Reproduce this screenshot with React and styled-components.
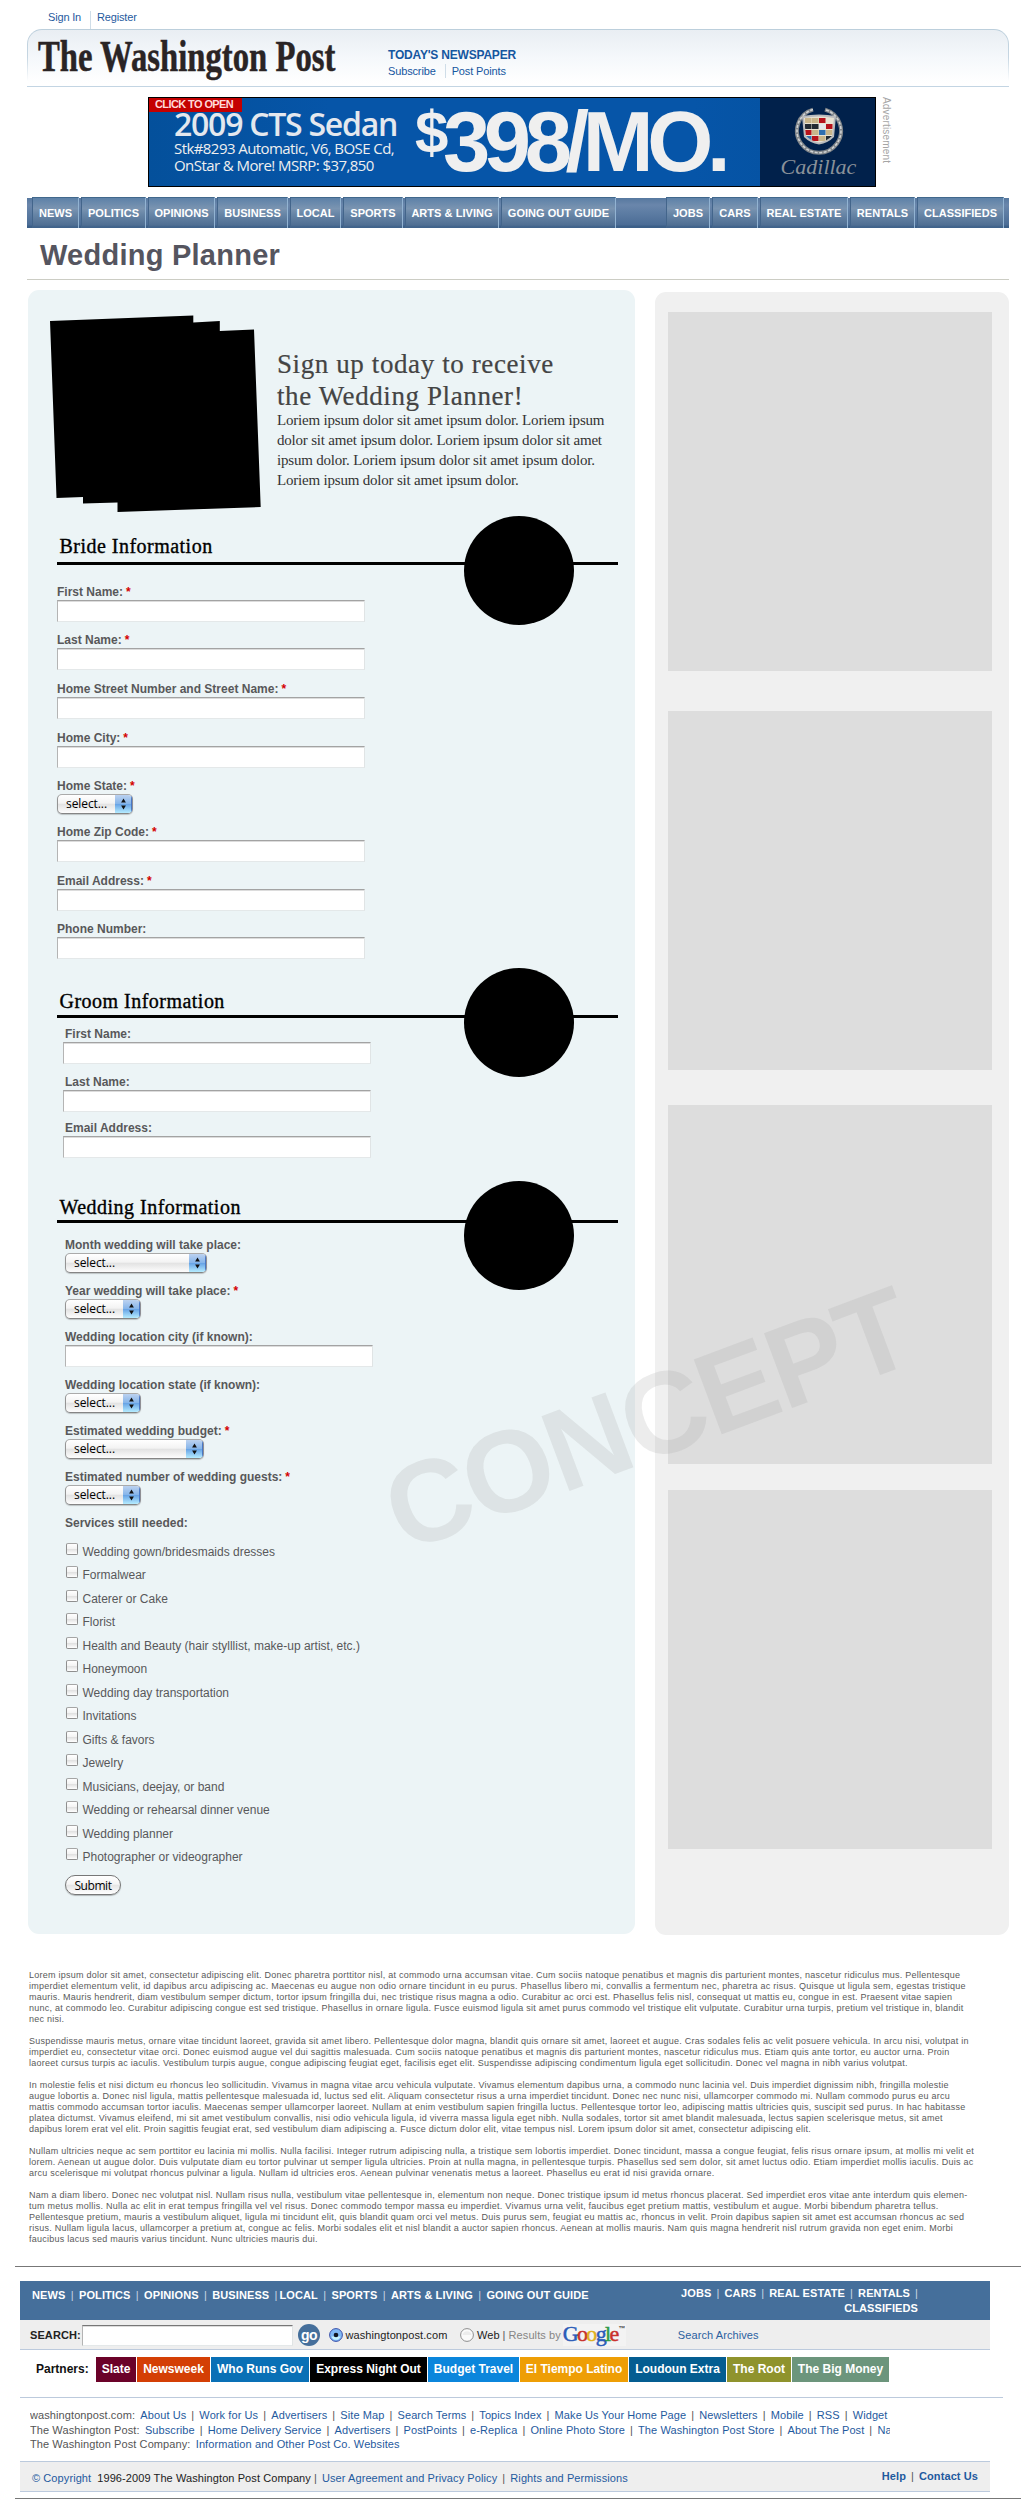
import React from "react";
import styled, { createGlobalStyle } from "styled-components";

const sans = `"Liberation Sans", Arial, sans-serif`;
const serif = `"Liberation Serif", "Times New Roman", serif`;
const humanist = `"Open Sans", "Noto Sans", sans-serif`;
const link = "#1f5a9e";

const Global = createGlobalStyle`
  * { box-sizing: border-box; }
  body { margin: 0; background: #fff; font-family: ${sans}; font-size: 11px; color: #333; }
  h1, h2, p { margin: 0; font-weight: normal; }
  a { color: inherit; text-decoration: none; }
`;

const Page = styled.div`
  position: relative;
  width: 1036px;
  height: 2500px;
  overflow: hidden;
  background: #fff;
`;

/* ---------- masthead ---------- */
const Account = styled.div`
  display: flex;
  height: 29px;
  padding: 11px 0 0 48px;
  line-height: 13px;
  color: ${link};
  letter-spacing: -0.17px;
`;

const Divided = styled.a`
  margin-left: 9px;
  padding-left: 6px;
  border-left: 1px solid #cfdde8;
`;

const MastheadEdge = styled.header`
  width: 982px;
  height: 58px;
  margin-left: 27px;
  padding: 1px 1px 0;
  border-radius: 15px 15px 0 0;
  border-bottom: 1px solid #c3d5e3;
  background: linear-gradient(#bccfdc 0%, #c6d6e2 50%, #ffffff 92%);
`;

const Masthead = styled.div`
  display: flex;
  height: 56px;
  border-radius: 14px 14px 0 0;
  background: linear-gradient(#e9eef3 0%, #f5f8fb 50%, #ffffff 95%);
`;

const Wordmark = styled.div`
  flex: none;
  width: 302px;
  height: 56px;
  margin-left: 10px;
  padding-top: 2px;
`;

const WordmarkText = styled.span`
  display: inline-block;
  transform: scaleX(0.743);
  transform-origin: 0 0;
  font: bold 44px/49px ${serif};
  color: #2a2425;
  -webkit-text-stroke: 0.5px #2a2425;
  white-space: nowrap;
`;

const Paper = styled.div`
  padding: 18px 0 0 48px;
  color: #1556a0;
`;

const PaperTitle = styled.div`
  font: bold 12px/15px ${sans};
  letter-spacing: -0.2px;
`;

const PaperLinks = styled.div`
  display: flex;
  margin-top: 1px;
  line-height: 14px;
  letter-spacing: -0.14px;
`;

/* ---------- banner ---------- */
const BannerRow = styled.div`
  display: flex;
  height: 90px;
  margin: 10px 0 0 148px;
`;

const Banner = styled.div`
  position: relative;
  display: flex;
  width: 728px;
  height: 90px;
  border: 1px solid #000;
  background: linear-gradient(90deg, #04509b 0%, #0655a8 25%, #0655a8 75%, #04509d 100%);
  color: #efefef;
  white-space: nowrap;
`;

const OpenTag = styled.div`
  position: absolute;
  left: 0;
  top: 0;
  width: 93px;
  height: 14px;
  padding-left: 6px;
  background: #c40000;
  color: #ffd9d9;
  font: bold 11px/13px ${sans};
  letter-spacing: -0.6px;
`;

const Offer = styled.div`
  width: 266px;
  padding: 10px 0 0 25px;
  font: 15px/17px ${humanist};
  letter-spacing: -0.57px;
`;

const Model = styled.div`
  font: 600 32px/32px ${humanist};
  letter-spacing: -1.25px;
  color: #e4e8ee;
`;

const Dollar = styled.div`
  width: 28px;
  padding-top: 5px;
  font: bold 60px/60px ${sans};
`;

const Price = styled.div`
  padding-top: 1px;
  font: bold 85px/85px ${sans};
  letter-spacing: -6.4px;
`;

const CarBrand = styled.div`
  display: flex;
  flex-direction: column;
  align-items: center;
  width: 115px;
  height: 88px;
  margin-left: auto;
  padding: 7px 0 0 2px;
  background: #01214b;
  color: #8a9199;
`;

const Script = styled.div`
  font: italic 22px/24px ${serif};
  letter-spacing: 0;
`;

const AdNote = styled.div`
  margin-left: 3px;
  writing-mode: vertical-rl;
  font: 10px/14px ${sans};
  letter-spacing: 0.17px;
  color: #a5a5a5;
`;

/* ---------- navigation ---------- */
const Nav = styled.nav`
  display: flex;
  gap: 2px;
  width: 982px;
  height: 31px;
  margin: 10px 0 0 27px;
  padding: 0 5px;
  background: linear-gradient(#fff 0 1px, #56789f 1px, #6a86ab 8px, #5b7ba2 17px, #4b6c95 28px, #3b5f88 29px);
`;

const Tab = styled.a`
  flex: none;
  width: ${(p) => p.$w}px;
  height: 31px;
  margin-left: ${(p) => p.$push || 0}px;
  border-left: 1px solid #43658b;
  border-right: 1px solid #92b3d2;
  border-top: 1px solid #41688c;
  background: linear-gradient(#5d81a8 0%, #7a94b1 35%, #6785a6 55%, #506f93 90%, #40638b 96%);
  color: #fff;
  font: bold 11px/30px ${sans};
  letter-spacing: 0.04px;
  text-align: center;
`;

const PageTitle = styled.h1`
  width: 982px;
  height: 52px;
  margin-left: 27px;
  padding: 11px 0 0 13px;
  border-bottom: 1px solid #cccdc4;
  font: bold 29px/32px ${sans};
  letter-spacing: 0.25px;
  color: #55555f;
`;

/* ---------- body columns ---------- */
const Columns = styled.div`
  display: flex;
  gap: 20px;
  height: 1645px;
  margin: 10px 0 0 28px;
`;

const Main = styled.main`
  width: 607px;
  height: 1644px;
  border-radius: 11px;
  background: #ecf4f6;
`;

const Sidebar = styled.aside`
  width: 354px;
  height: 1643px;
  margin-top: 2px;
  padding: 20px 0 0 13px;
  border-radius: 11px;
  background: #f0f0f0;
`;

const AdSlot = styled.div`
  width: 324px;
  height: 359px;
  margin-bottom: ${(p) => p.$after}px;
  background: #ddd;
`;

const Hero = styled.section`
  display: flex;
  height: 244px;
  padding-left: 22px;
`;

const Stack = styled.svg`
  flex: none;
  display: block;
  width: 227px;
  height: 244px;
`;

const Pitch = styled.div`
  padding-top: 58px;
  white-space: nowrap;
`;

const Headline = styled.h2`
  font: 27px/32px ${serif};
  letter-spacing: 0.6px;
  color: #444;
  -webkit-text-stroke: 0.2px #444;
`;

const Blurb = styled.p`
  margin-top: -2px;
  font: 15px/20px ${serif};
  letter-spacing: -0.2px;
  color: #333;
`;

const SectionHead = styled.h2`
  position: relative;
  width: 561px;
  height: 31px;
  margin: 0 0 ${(p) => p.$after}px 28.5px;
  padding: ${(p) => p.$drop}px 0 0 3px;
  border-bottom: 3px solid #000;
  font: 20px/24px ${serif};
  letter-spacing: 0.48px;
  color: #000;
  -webkit-text-stroke: 0.35px #000;
`;

const Dot = styled.span`
  position: absolute;
  left: 407.5px;
  top: ${(p) => p.$top}px;
  width: 110px;
  height: 109px;
  border-radius: 50%;
  background: #000;
`;

const Field = styled.label`
  display: block;
  height: ${(p) => p.$h}px;
  padding-left: ${(p) => p.$x}px;
`;

const Label = styled.span`
  display: block;
  height: 15px;
  font: bold 12px/14px ${sans};
  color: #58585a;
`;

const Star = styled.span`
  margin-left: 3px;
  color: #d40000;
`;

const TextBox = styled.input`
  display: block;
  width: 308px;
  height: 22px;
  margin-left: ${(p) => p.$shift || 0}px;
  padding: 0 4px;
  border: 1px solid;
  border-color: #a3a3a3 #e0e4e5 #e4e8e9 #b4b4b4;
  border-radius: 0;
  background: #fff;
  box-shadow: inset 0 1px 0 #dcdcdc;
  outline: none;
`;

const Picker = styled.span`
  display: flex;
  justify-content: space-between;
  width: ${(p) => p.$w}px;
  height: 20px;
  border: 1px solid;
  border-color: #aaa #8f8f95 #858585 #949494;
  border-radius: 5px;
  overflow: hidden;
  background: linear-gradient(#fff 0%, #f3f3f3 45%, #e3e3e3 52%, #fdfdfd 100%);
  box-shadow: 0 1px 1px rgba(0, 0, 0, 0.2);
  padding-left: 8px;
  font: 12px/18px ${humanist};
  letter-spacing: -0.08px;
  color: #000;
`;

const Arrows = styled.svg`
  display: block;
  width: 17px;
  height: 18px;
  background: linear-gradient(#bcd2f0 0%, #86b5ea 48%, #68a4e6 52%, #b5ecff 100%);
  box-shadow: inset -1px 0 0 #4a78c4;
`;

const ServicesTitle = styled.div`
  height: 27px;
  padding-left: 37px;
  font: bold 12px/14px ${sans};
  color: #58585a;
`;

const Service = styled.label`
  display: flex;
  height: ${(p) => p.$h}px;
  padding-left: 38px;
  font: 12px/14px ${sans};
  color: #58585a;
`;

const Check = styled.input`
  appearance: none;
  width: 12px;
  height: 12px;
  margin: 0 4.5px 0 0;
  border: 1px solid #8f8f8f;
  border-top-color: #a5a5a5;
  border-radius: 2px;
  background: linear-gradient(#fff 0%, #f4f4f4 45%, #e2e2e2 55%, #fff 100%);
`;

const CheckText = styled.span`
  padding-top: 2px;
`;

const Submit = styled.button`
  display: block;
  width: 56px;
  height: 20px;
  margin: 3px 0 0 37px;
  padding: 0;
  border: 1px solid #777;
  border-radius: 10px;
  background: linear-gradient(#fff 0%, #f5f5f5 45%, #e6e6e6 52%, #fff 100%);
  box-shadow: 0 1px 1px rgba(0, 0, 0, 0.25);
  font: 12px/17px ${humanist};
  letter-spacing: -0.42px;
  color: #000;
`;

const Watermark = styled.div`
  position: absolute;
  left: 403.5px;
  top: 1455px;
  transform-origin: 0 98px;
  transform: rotate(-20.5deg);
  font: bold 116px/116px ${sans};
  letter-spacing: -2.5px;
  color: rgba(165, 165, 165, 0.21);
  pointer-events: none;
`;

/* ---------- small print ---------- */
const Fine = styled.section`
  height: 310px;
  padding: 35px 0 0 29px;
`;

const FineText = styled.p`
  margin-bottom: 11px;
  font: 9px/11px ${sans};
  letter-spacing: 0.245px;
  color: #5a5a5a;
  white-space: pre;
`;

/* ---------- footer ---------- */
const PageRule = styled.div`
  width: 1006px;
  height: 1px;
  margin: ${(p) => p.$before}px 0 0 15px;
  background: #777;
`;

const FooterNav = styled.div`
  display: flex;
  justify-content: space-between;
  width: 970px;
  height: 39px;
  margin: 14px 0 0 20px;
  padding: 0 72px 0 12px;
  background: #456f9b;
  color: #fff;
  font: bold 11px/15px ${sans};
  letter-spacing: 0.1px;
  white-space: nowrap;
`;

const FooterGroup = styled.div`
  display: flex;
  flex-wrap: wrap;
  align-content: flex-start;
  justify-content: ${(p) => (p.$end ? "flex-end" : "flex-start")};
  width: ${(p) => p.$w}px;
  padding-top: ${(p) => p.$top}px;
`;

const Sep = styled.span`
  margin: 0 ${(p) => p.$r ?? 5.1}px 0 ${(p) => p.$l ?? 5}px;
  font-weight: normal;
  color: ${(p) => p.$c || "#555"};
`;

const SearchRow = styled.div`
  display: flex;
  width: 970px;
  height: 30px;
  margin-left: 20px;
  padding-left: 10px;
  border-bottom: 1px solid #bccadd;
  background: #eee;
  font: 11px/31px ${sans};
  letter-spacing: 0.09px;
  color: #222;
  white-space: nowrap;
`;

const SearchLabel = styled.b`
  width: 52px;
`;

const SearchBox = styled(TextBox)`
  width: 211px;
  height: 21px;
  margin-top: 5px;
  border-top-color: #777;
`;

const Go = styled.button`
  width: 22px;
  height: 22px;
  margin: 4px 9px 0 5px;
  padding: 0;
  border: 0;
  border-radius: 50%;
  background: #456f9b;
  color: #fff;
  font: bold 14px/18px ${sans};
  letter-spacing: -0.6px;
`;

const Radio = styled.svg`
  flex: none;
  width: 14px;
  height: 14px;
  margin: 8px 2.5px 0 ${(p) => p.$before || 0}px;
`;

const Muted = styled.span`
  color: #858585;
`;

const Google = styled.span`
  width: 63px;
  height: 22px;
  margin: 4px 0 0 2px;
  font: 22px/20px ${serif};
  letter-spacing: -1.7px;
  background: #f3f3f3;
`;

const Ink = styled.span`
  color: ${(p) => p.$c};
  -webkit-text-stroke: 0.5px ${(p) => p.$c};
`;

const Tm = styled.sup`
  margin-left: 1px;
  font: bold 7px/7px ${sans};
  letter-spacing: 0;
  vertical-align: 10px;
  color: #444;
`;

const Archives = styled.a`
  margin-left: 52px;
  color: #2b61a0;
`;

const Partners = styled.div`
  display: flex;
  gap: 1px;
  height: 25px;
  margin: 7px 0 0 36px;
  font: bold 12px/24px ${sans};
  color: #111;
  white-space: nowrap;
`;

const PartnersLabel = styled.span`
  width: 59px;
`;

const Partner = styled.a`
  width: ${(p) => p.$w}px;
  background: ${(p) => p.$c};
  color: #fff;
  text-align: center;
`;

const Directory = styled.div`
  width: 983px;
  height: 64px;
  margin: 15px 0 0 20px;
  padding: 10px 113px 0 10px;
  border-top: 1px solid #bccadd;
`;

const DirectoryLine = styled.div`
  display: flex;
  overflow: hidden;
  height: 14.5px;
  font: 11px/14.5px ${sans};
  letter-spacing: 0.09px;
  color: ${link};
  white-space: nowrap;
`;

const Owner = styled.span`
  margin-right: 5.3px;
  color: #555;
`;

const Legal = styled.div`
  display: flex;
  width: 970px;
  height: 31px;
  margin-left: 20px;
  padding: 0 12px;
  border: solid #bccadd;
  border-width: 1px 0;
  background: #eee;
  font: 11px/32px ${sans};
  letter-spacing: 0.09px;
  color: ${link};
  white-space: nowrap;
`;

const Holder = styled.span`
  margin-left: 6px;
  color: #222;
`;

const Help = styled.b`
  margin-left: auto;
  line-height: 28px;
`;

/* ---------- content ---------- */
const tabs = [
  ["NEWS", 47], ["POLITICS", 65], ["OPINIONS", 67], ["BUSINESS", 71], ["LOCAL", 51], ["SPORTS", 60],
  ["ARTS & LIVING", 94], ["GOING OUT GUIDE", 115], ["JOBS", 44, 48], ["CARS", 46], ["REAL ESTATE", 88],
  ["RENTALS", 65], ["CLASSIFIEDS", 87],
];

const bride = [
  ["First Name:", true, 48], ["Last Name:", true, 49], ["Home Street Number and Street Name:", true, 49],
  ["Home City:", true, 48], ["Home State:", true, 46, 76], ["Home Zip Code:", true, 49],
  ["Email Address:", true, 48], ["Phone Number:", false, 65],
];

const groom = [["First Name:", false, 48], ["Last Name:", false, 46], ["Email Address:", false, 71]];

const wedding = [
  ["Month wedding will take place:", false, 46, 142], ["Year wedding will take place:", true, 46, 76],
  ["Wedding location city (if known):", false, 48], ["Wedding location state (if known):", false, 46, 76],
  ["Estimated wedding budget:", true, 46, 139], ["Estimated number of wedding guests:", true, 46, 76],
];

const services = [
  "Wedding gown/bridesmaids dresses", "Formalwear", "Caterer or Cake", "Florist",
  "Health and Beauty (hair stylllist, make-up artist, etc.)", "Honeymoon", "Wedding day transportation",
  "Invitations", "Gifts & favors", "Jewelry", "Musicians, deejay, or band",
  "Wedding or rehearsal dinner venue", "Wedding planner", "Photographer or videographer",
];

const paragraphs = [
`Lorem ipsum dolor sit amet, consectetur adipiscing elit. Donec pharetra porttitor nisl, at commodo urna accumsan vitae. Cum sociis natoque penatibus et magnis dis parturient montes, nascetur ridiculus mus. Pellentesque
imperdiet elementum velit, id dapibus arcu adipiscing ac. Maecenas eu augue non odio ornare tincidunt in eu purus. Phasellus libero mi, convallis a fermentum nec, pharetra ac risus. Quisque ut ligula sem, egestas tristique
mauris. Mauris hendrerit, diam vestibulum semper dictum, tortor ipsum fringilla dui, nec tristique risus magna a odio. Curabitur ac orci est. Phasellus felis nisl, consequat ut mattis eu, congue in est. Praesent vitae sapien
nunc, at commodo leo. Curabitur adipiscing congue est sed tristique. Phasellus in ornare ligula. Fusce euismod ligula sit amet purus commodo vel tristique elit vulputate. Curabitur urna turpis, pretium vel tristique in, blandit
nec nisi.`,
`Suspendisse mauris metus, ornare vitae tincidunt laoreet, gravida sit amet libero. Pellentesque dolor magna, blandit quis ornare sit amet, laoreet et augue. Cras sodales felis ac velit posuere vehicula. In arcu nisi, volutpat in
imperdiet eu, consectetur vitae orci. Donec euismod augue vel dui sagittis malesuada. Cum sociis natoque penatibus et magnis dis parturient montes, nascetur ridiculus mus. Etiam quis ante tortor, eu auctor urna. Proin
laoreet cursus turpis ac iaculis. Vestibulum turpis augue, congue adipiscing feugiat eget, facilisis eget elit. Suspendisse adipiscing condimentum ligula eget sollicitudin. Donec vel magna in nibh varius volutpat.`,
`In molestie felis et nisi dictum eu rhoncus leo sollicitudin. Vivamus in magna vitae arcu vehicula vulputate. Vivamus elementum dapibus urna, a commodo nunc lacinia vel. Duis imperdiet dignissim nibh, fringilla molestie
augue lobortis a. Donec nisl ligula, mattis pellentesque malesuada id, luctus sed elit. Aliquam consectetur risus a urna imperdiet tincidunt. Donec nec nunc nisi, ullamcorper commodo mi. Nullam commodo purus eu arcu
mattis commodo accumsan tortor iaculis. Maecenas semper ullamcorper laoreet. Nullam at enim vestibulum sapien fringilla luctus. Pellentesque tortor leo, adipiscing mattis ultricies quis, suscipit sed purus. In hac habitasse
platea dictumst. Vivamus eleifend, mi sit amet vestibulum convallis, nisi odio vehicula ligula, id viverra massa ligula eget nibh. Nulla sodales, tortor sit amet blandit malesuada, lectus sapien scelerisque metus, sit amet
dapibus lorem erat vel elit. Proin sagittis feugiat erat, sed vestibulum diam adipiscing a. Fusce dictum dolor elit, vitae tempus nisl. Lorem ipsum dolor sit amet, consectetur adipiscing elit.`,
`Nullam ultricies neque ac sem porttitor eu lacinia mi mollis. Nulla facilisi. Integer rutrum adipiscing nulla, a tristique sem lobortis imperdiet. Donec tincidunt, massa a congue feugiat, felis risus ornare ipsum, at mollis mi velit et
lorem. Aenean ut augue dolor. Duis vulputate diam eu tortor pulvinar ut semper ligula ultricies. Proin at nulla magna, in pellentesque turpis. Phasellus sed sem dolor, sit amet luctus odio. Etiam imperdiet mollis iaculis. Duis ac
arcu scelerisque mi volutpat rhoncus pulvinar a ligula. Nullam id ultricies eros. Aenean pulvinar venenatis metus a laoreet. Phasellus eu erat id nisi gravida ornare.`,
`Nam a diam libero. Donec nec volutpat nisl. Nullam risus nulla, vestibulum vitae pellentesque in, elementum non neque. Donec tristique ipsum id metus rhoncus placerat. Sed imperdiet eros vitae ante interdum quis elemen-
tum metus mollis. Nulla ac elit in erat tempus fringilla vel vel risus. Donec commodo tempor massa eu imperdiet. Vivamus urna velit, faucibus eget pretium mattis, vestibulum et augue. Morbi bibendum pharetra tellus.
Pellentesque pretium, mauris a vestibulum aliquet, ligula mi tincidunt elit, quis blandit quam orci vel metus. Duis purus sem, feugiat eu mattis ac, rhoncus in velit. Proin dapibus sapien sit amet est accumsan rhoncus ac sed
risus. Nullam ligula lacus, ullamcorper a pretium at, congue ac felis. Morbi sodales elit et nisl blandit a auctor sapien rhoncus. Aenean at mollis mauris. Nam quis magna hendrerit nisl rutrum gravida non eget enim. Morbi
faucibus lacus sed mauris varius tincidunt. Nunc ultricies mauris dui.`,
];

const partners = [
  ["Slate", 40, "#6b0229"], ["Newsweek", 73, "#d43f05"], ["Who Runs Gov", 98, "#0970b6"],
  ["Express Night Out", 117, "#000"], ["Budget Travel", 91, "#0b86dc"], ["El Tiempo Latino", 108, "#ee9e05"],
  ["Loudoun Extra", 97, "#045d91"], ["The Root", 64, "#8f932d"], ["The Big Money", 97, "#6c957c"],
];

const directory = [
  ["washingtonpost.com:", ["About Us", "Work for Us", "Advertisers", "Site Map", "Search Terms", "Topics Index",
    "Make Us Your Home Page", "Newsletters", "Mobile", "RSS", "Widget"]],
  ["The Washington Post:", ["Subscribe", "Home Delivery Service", "Advertisers", "PostPoints", "e-Replica",
    "Online Photo Store", "The Washington Post Store", "About The Post", "Na"]],
  ["The Washington Post Company:", ["Information and Other Post Co. Websites"]],
];

const footerLeft = ["NEWS", "POLITICS", "OPINIONS", "BUSINESS", "LOCAL", "SPORTS", "ARTS & LIVING", "GOING OUT GUIDE"];
const footerRight = ["JOBS", "CARS", "REAL ESTATE", "RENTALS"];
const pale = "#c9d6e3";

function Select({ width }) {
  return (
    <Picker $w={width} role="combobox">
      select...
      <Arrows viewBox="0 0 17 18">
        <path d="M8.500 3.500l2.400 4H6.100zM8.500 14.500l2.400-4H6.100z" fill="#111" />
      </Arrows>
    </Picker>
  );
}

function Fields({ rows, x, shift }) {
  return rows.map(([name, required, h, select]) => (
    <Field key={name} $h={h} $x={x}>
      <Label>{name}{required && <Star>*</Star>}</Label>
      {select ? <Select width={select} /> : <TextBox $shift={shift} />}
    </Field>
  ));
}

function Emblem() {
  const cells = [
    ["#c8b58a", 0, 0], ["#c8b58a", 1, 0], ["#b5121b", 2, 0], ["#e8e2d2", 3, 0],
    ["#222a33", 0, 1], ["#222a33", 1, 1], ["#e3e6ea", 2, 1], ["#b5121b", 3, 1],
    ["#b5121b", 0, 2], ["#c8b58a", 1, 2], ["#2f6fb0", 2, 2], ["#c8b58a", 3, 2],
    ["#2f6fb0", 0, 3], ["#b5121b", 1, 3], ["#c8b58a", 2, 3], ["#222a33", 3, 3],
  ];
  return (
    <svg width="52" height="50" viewBox="0 0 52 50">
      <path d="M20 4.6A22 22 0 1 0 32 4.6" fill="none" stroke="#7f8488" strokeWidth="4" />
      <path d="M20 4.6A22 22 0 1 0 32 4.6" fill="none" stroke="#cfd2d4" strokeWidth="1.6" strokeDasharray="3 1.5" />
      <clipPath id="shield"><path d="M11 13Q26 10 41 13L39 31Q34 36 26 37.500Q18 36 13 31Z" /></clipPath>
      <path d="M9 11Q26 8 43 11L41 32Q35 38 26 39.500Q17 38 11 32Z" fill="#b9bbbd" />
      <g clipPath="url(#shield)">
        <rect x="10" y="10" width="32" height="30" fill="#e8e2d2" />
        {cells.map(([c, i, j]) => (
          <rect key={`${i}${j}`} x={12 + i * 7} y={13 + j * 6} width="6.500" height="5" fill={c} />
        ))}
      </g>
    </svg>
  );
}

function Links({ names, color, ...gap }) {
  return names.map((n, i) => (
    <React.Fragment key={n}>
      {i > 0 && <Sep $c={color} $l={gap.l} $r={n === "LOCAL" ? 2 : gap.r}>|</Sep>}
      <a>{n}</a>
    </React.Fragment>
  ));
}

export default function App() {
  return (
    <Page>
      <Global />
      <Account>
        <a>Sign In</a>
        <Divided>Register</Divided>
      </Account>

      <MastheadEdge>
        <Masthead>
          <Wordmark>
            <WordmarkText>The Washington Post</WordmarkText>
          </Wordmark>
          <Paper>
            <PaperTitle>TODAY'S NEWSPAPER</PaperTitle>
            <PaperLinks>
              <a>Subscribe</a>
              <Divided>Post Points</Divided>
            </PaperLinks>
          </Paper>
        </Masthead>
      </MastheadEdge>

      <BannerRow>
        <Banner>
          <Offer>
            <Model>2009 CTS Sedan</Model>
            Stk#8293 Automatic, V6, BOSE Cd,
            <br />
            OnStar &amp; More! MSRP: $37,850
          </Offer>
          <Dollar>$</Dollar>
          <Price>398/MO.</Price>
          <CarBrand>
            <Emblem />
            <Script>Cadillac</Script>
          </CarBrand>
          <OpenTag>CLICK TO OPEN</OpenTag>
        </Banner>
        <AdNote>Advertisement</AdNote>
      </BannerRow>

      <Nav>
        {tabs.map(([name, w, push]) => (
          <Tab key={name} $w={w} $push={push}>{name}</Tab>
        ))}
      </Nav>

      <PageTitle>Wedding Planner</PageTitle>

      <Columns>
        <Main>
          <Hero>
            <Stack viewBox="50 290 227 244">
              <path d="M50 321L193.300 315.500V322.500L219.800 321V331L254 329.500L260.700 507L117.500 512V502.500L83 503.500V497L56.500 498Z" />
            </Stack>
            <Pitch>
              <Headline>
                Sign up today to receive
                <br />
                the Wedding Planner!
              </Headline>
              <Blurb>
                Loriem ipsum dolor sit amet ipsum dolor. Loriem ipsum
                <br />
                dolor sit amet ipsum dolor. Loriem ipsum dolor sit amet
                <br />
                ipsum dolor. Loriem ipsum dolor sit amet ipsum dolor.
                <br />
                Loriem ipsum dolor sit amet ipsum dolor.
              </Blurb>
            </Pitch>
          </Hero>

          <SectionHead $after={20} $drop={0}>
            Bride Information
            <Dot $top={-18} />
          </SectionHead>
          <Fields rows={bride} x={29} />

          <SectionHead $after={9} $drop={2}>
            Groom Information
            <Dot $top={-19} />
          </SectionHead>
          <Fields rows={groom} x={37} shift={-2} />

          <SectionHead $after={15} $drop={3}>
            Wedding Information
            <Dot $top={-11} />
          </SectionHead>
          <Fields rows={wedding} x={37} />

          <ServicesTitle>Services still needed:</ServicesTitle>
          {services.map((s, i) => (
            <Service key={s} $h={i % 2 ? 24 : 23}>
              <Check type="checkbox" />
              <CheckText>{s}</CheckText>
            </Service>
          ))}
          <Submit>Submit</Submit>
        </Main>

        <Sidebar>
          <AdSlot $after={40} />
          <AdSlot $after={35} />
          <AdSlot $after={26} />
          <AdSlot $after={0} />
        </Sidebar>
      </Columns>

      <Fine>
        {paragraphs.map((p) => (
          <FineText key={p.slice(0, 12)}>{p}</FineText>
        ))}
      </Fine>

      <PageRule $before={21} />
      <FooterNav>
        <FooterGroup $w={580} $top={7}>
          <Links names={footerLeft} color={pale} l={5.3} r={5.3} />
        </FooterGroup>
        <FooterGroup $w={250} $top={5} $end>
          <Links names={footerRight} color={pale} l={5.1} r={5.1} />
          <Sep $c={pale} $l={5.1} $r={0}>|</Sep>
          <a>CLASSIFIEDS</a>
        </FooterGroup>
      </FooterNav>

      <SearchRow>
        <SearchLabel>SEARCH:</SearchLabel>
        <SearchBox />
        <Go>go</Go>
        <Radio viewBox="0 0 14 14">
          <circle cx="7" cy="7" r="6.400" fill="#7fb8f5" stroke="#3a4fa8" />
          <path d="M2.500 8.500A4.700 4.700 0 0 0 11.500 8.500Z" fill="#c4f3ff" />
          <circle cx="7" cy="7" r="2.300" fill="#10151f" />
        </Radio>
        washingtonpost.com
        <Radio viewBox="0 0 14 14" $before={13}>
          <circle cx="7" cy="7" r="6.400" fill="#fafafa" stroke="#8d8d8d" />
          <path d="M2.500 7A4.600 4.600 0 0 1 11.500 7Z" fill="#ececec" />
        </Radio>
        Web
        <Sep $l={3} $r={3}>|</Sep>
        <Muted>Results by</Muted>
        <Google>
          <Ink $c="#2a5bb8">G</Ink><Ink $c="#c9302c">o</Ink><Ink $c="#e0b020">o</Ink><Ink $c="#2a5bb8">g</Ink>
          <Ink $c="#2f9a48">l</Ink><Ink $c="#c9302c">e</Ink><Tm>™</Tm>
        </Google>
        <Archives>Search Archives</Archives>
      </SearchRow>

      <Partners>
        <PartnersLabel>Partners:</PartnersLabel>
        {partners.map(([name, w, c]) => (
          <Partner key={name} $w={w} $c={c}>{name}</Partner>
        ))}
      </Partners>

      <Directory>
        {directory.map(([owner, names]) => (
          <DirectoryLine key={owner}>
            <Owner>{owner}</Owner>
            <Links names={names} />
          </DirectoryLine>
        ))}
      </Directory>

      <Legal>
        <a>© Copyright</a>
        <Holder>1996-2009 The Washington Post Company</Holder>
        <Sep $l={3} $r={5}>|</Sep>
        <Links names={["User Agreement and Privacy Policy", "Rights and Permissions"]} />
        <Help>
          <Links names={["Help", "Contact Us"]} />
        </Help>
      </Legal>
      <PageRule $before={6} />

      <Watermark>CONCEPT</Watermark>
    </Page>
  );
}
